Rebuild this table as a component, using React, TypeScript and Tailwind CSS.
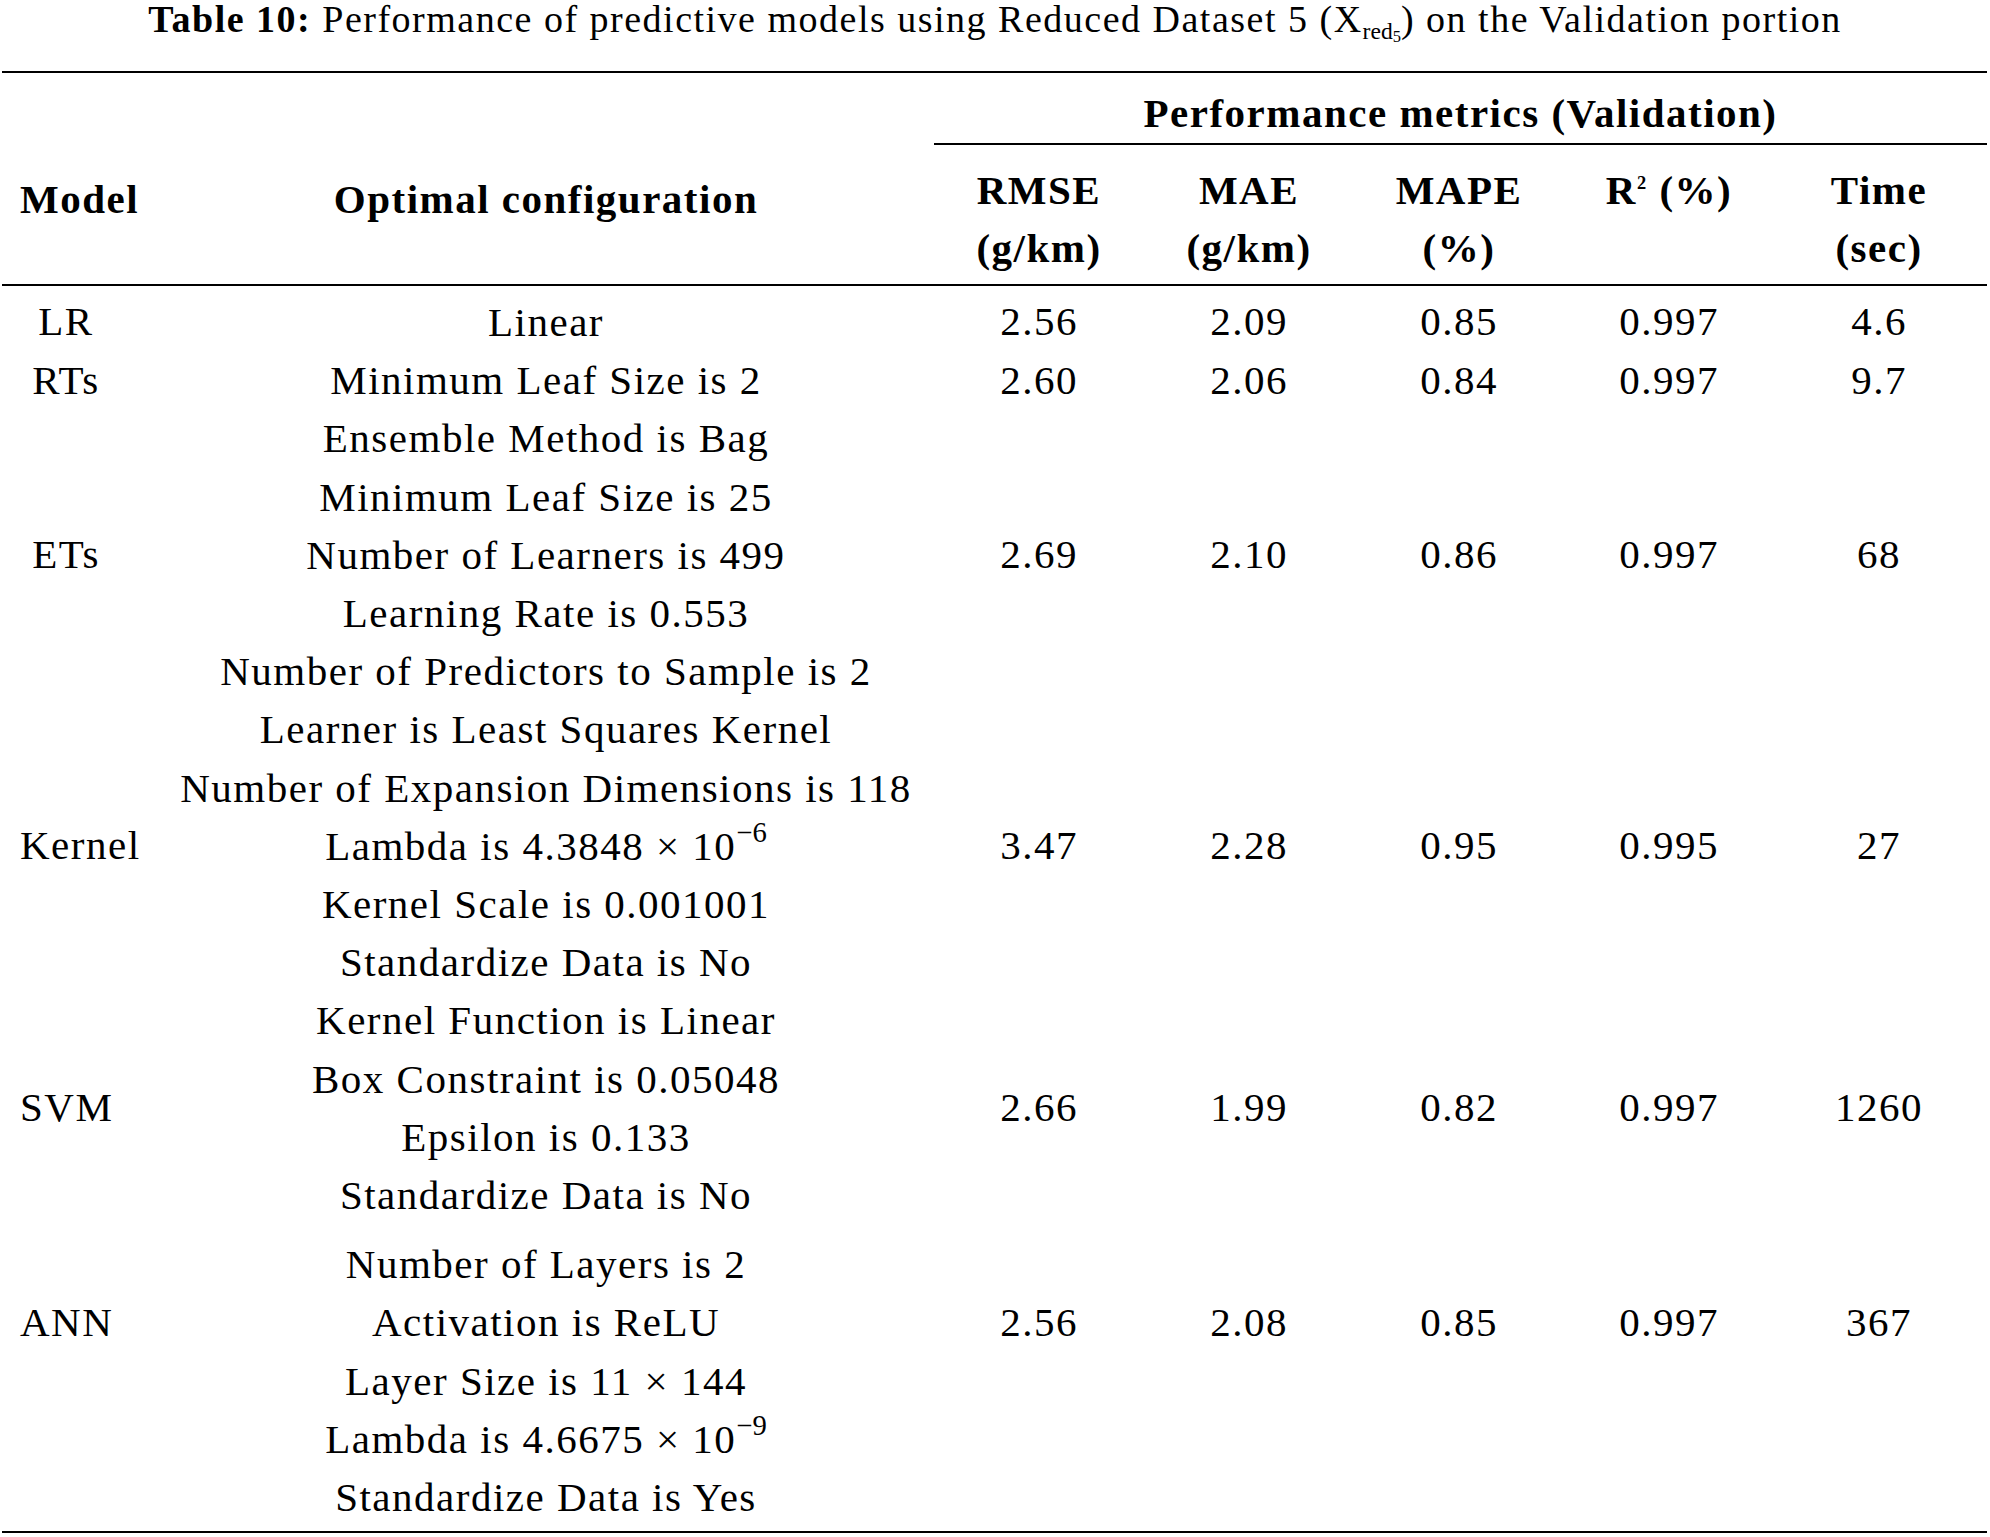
import React from 'react';

const serif = { fontFamily: '"Liberation Serif", "Times New Roman", serif' };

function Lambda({ value, exp }: { value: string; exp: string }) {
  return (
    <span>
      Lambda is {value} × 10
      <sup className="relative -top-[0.62em] align-baseline text-[0.7em] leading-none tracking-normal">−{exp}</sup>
    </span>
  );
}

type Group = {
  model: string;
  lines: React.ReactNode[];
  vals: string[];
  h: string;
  extra?: string;
};

const groups: Group[] = [
  { model: 'LR', lines: ['Linear'], vals: ['2.56', '2.09', '0.85', '0.997', '4.6'], h: 'h-[58.2px]' },
  { model: 'RTs', lines: ['Minimum Leaf Size is 2'], vals: ['2.60', '2.06', '0.84', '0.997', '9.7'], h: 'h-[58.2px]' },
  {
    model: 'ETs',
    lines: [
      'Ensemble Method is Bag',
      'Minimum Leaf Size is 25',
      'Number of Learners is 499',
      'Learning Rate is 0.553',
      'Number of Predictors to Sample is 2',
    ],
    vals: ['2.69', '2.10', '0.86', '0.997', '68'],
    h: 'h-[291px]',
  },
  {
    model: 'Kernel',
    lines: [
      'Learner is Least Squares Kernel',
      'Number of Expansion Dimensions is 118',
      <Lambda value="4.3848" exp="6" />,
      'Kernel Scale is 0.001001',
      'Standardize Data is No',
    ],
    vals: ['3.47', '2.28', '0.95', '0.995', '27'],
    h: 'h-[291px]',
  },
  {
    model: 'SVM',
    lines: ['Kernel Function is Linear', 'Box Constraint is 0.05048', 'Epsilon is 0.133', 'Standardize Data is No'],
    vals: ['2.66', '1.99', '0.82', '0.997', '1260'],
    h: 'h-[232.8px]',
  },
  {
    model: 'ANN',
    lines: [
      'Number of Layers is 2',
      'Activation is ReLU',
      'Layer Size is 11 × 144',
      <Lambda value="4.6675" exp="9" />,
      'Standardize Data is Yes',
    ],
    vals: ['2.56', '2.08', '0.85', '0.997', '367'],
    h: 'h-[174.6px]',
    extra: 'mt-[11px]',
  },
];

const metrics = [
  ['RMSE', '(g/km)'],
  ['MAE', '(g/km)'],
  ['MAPE', '(%)'],
  ['R2', ''],
  ['Time', '(sec)'],
];

export default function App() {
  return (
    <div className="w-[1990px] bg-white px-[2px] text-black text-[41px] tracking-[1.5px]" style={serif}>
      <div className="h-[71px] text-center text-[38px] leading-[38px] whitespace-nowrap">
        <span className="font-bold">Table 10:</span> Performance of predictive models using Reduced Dataset 5 (X
        <span className="relative top-[0.3em] text-[0.62em] leading-none tracking-normal">
          red<span className="relative top-[0.2em] text-[0.7em]">5</span>
        </span>
        ) on the Validation portion
      </div>

      <div className="w-[1985px]">
        <div className="flex border-t-2 border-b-2 border-black font-bold">
          <div className="w-[110px] pl-[18px] pt-[97px]">
            <div className="w-[92px] text-center leading-[58px] whitespace-nowrap">Model</div>
          </div>
          <div className="w-[822px] pl-[46px] pt-[97px] text-center leading-[58px] whitespace-nowrap">
            Optimal configuration
          </div>
          <div className="flex flex-1 flex-col">
            <div className="border-b-2 border-black pt-[11px] pb-[1px] text-center leading-[58px] whitespace-nowrap">
              Performance metrics (Validation)
            </div>
            <div className="flex pt-[16px] pb-[7px]">
              {metrics.map(([a, b]) => (
                <div key={a} className="w-[210px] text-center leading-[58px] whitespace-nowrap">
                  <div>
                    {a === 'R2' ? (
                      <>
                        R<sup className="relative -top-[0.8em] align-baseline text-[0.45em] leading-none">2</sup> (%)
                      </>
                    ) : (
                      a
                    )}
                  </div>
                  <div className="h-[58px]">{b}</div>
                </div>
              ))}
            </div>
          </div>
        </div>

        <div className="border-b-2 border-black pt-[7px] pb-[5px]">
          {groups.map((g) => (
            <div key={g.model} className={`flex items-start ${g.extra ?? ''}`}>
              <div className={`w-[110px] pl-[18px] flex items-center ${g.h}`}>
                <div className="w-[92px] text-center whitespace-nowrap">{g.model}</div>
              </div>
              <div className="w-[822px] pl-[46px] flex flex-col">
                {g.lines.map((l, i) => (
                  <div key={i} className="h-[58.2px] leading-[58.2px] text-center whitespace-nowrap">
                    {l}
                  </div>
                ))}
              </div>
              {g.vals.map((v, i) => (
                <div key={i} className={`w-[210px] flex items-center justify-center ${g.h}`}>
                  {v}
                </div>
              ))}
            </div>
          ))}
        </div>
      </div>
    </div>
  );
}
